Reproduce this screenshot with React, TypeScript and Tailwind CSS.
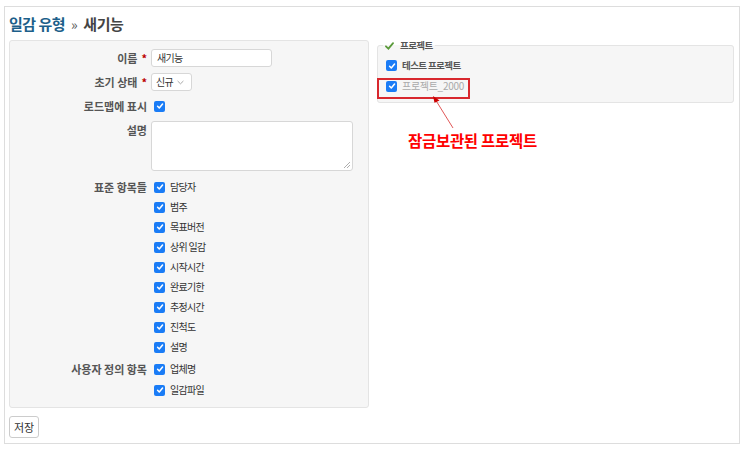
import React from "react";

const Check = ({ className = "" }: { className?: string }) => (
  <span className={"inline-flex h-[11px] w-[11px] shrink-0 items-center justify-center rounded-[2px] bg-[#1a7cf6] " + className}>
    <svg width="8" height="8" viewBox="0 0 10 10" fill="none">
      <path d="M2 5.3 L4.1 7.4 L8.2 2.6" stroke="white" strokeWidth="1.9" strokeLinecap="round" strokeLinejoin="round" />
    </svg>
  </span>
);

const Label = ({ text, req, top }: { text: string; req?: boolean; top?: boolean }) => (
  <div className={"w-[139px] shrink-0 whitespace-nowrap pr-[2px] text-right font-bold text-[#555] " + (top ? "pt-[4px]" : "")}>
    {text}
    {req && <span className="ml-[4px] text-[#bb0000]">*</span>}
  </div>
);

const Row = ({ label, req, children, top }: { label: string; req?: boolean; children: React.ReactNode; top?: boolean }) => (
  <div className={"flex " + (top ? "items-start" : "items-center")}>
    <Label text={label} req={req} top={top} />
    <div className="ml-[2px] flex-1">{children}</div>
  </div>
);

const CheckItem = ({ text }: { text: string }) => (
  <div className="flex h-[20px] items-center pl-[3px]">
    <Check />
    <span className="ml-[5px] whitespace-pre text-[10px] tracking-[-0.7px] text-[#333]">{text}</span>
  </div>
);

export default function App() {
  const std = ["담당자", "범주", "목표버전", "상위 일감", "시작시간", "완료기한", "추정시간", "진척도", "설명"];
  return (
    <div
      className="bg-white text-[11px] leading-none text-[#333]"
      style={{ fontFamily: '"Noto Sans CJK KR", "Noto Sans", sans-serif' }}
    >
      <div className="ml-[4px] mt-[6px] h-[438px] w-[736px] border border-[#dddddd] px-[4px]">
        <div className="flex h-[33px] items-center whitespace-nowrap text-[15px] font-bold tracking-[-0.5px]">
          <span className="text-[#1d5f8a]">일감 유형</span>
          <span className="mx-[6px] text-[14px] font-normal text-[#555]">»</span>
          <span className="text-[#444]">새기능</span>
        </div>
        <div className="flex items-start gap-[8px]">
          <div className="w-[360px] rounded-[3px] border border-[#e4e4e4] bg-[#f6f6f6] pb-[7px] pt-[8px]">
            <Row label="이름" req>
              <div className="flex h-[18px] w-[121px] items-center rounded-[3px] border border-[#d7d7d7] bg-white px-[5px] text-[10px] tracking-[-0.7px] text-[#333]">새기능</div>
            </Row>
            <div className="mt-[6px]">
              <Row label="초기 상태" req>
                <div className="flex h-[18px] w-[41px] items-center gap-[4px] whitespace-nowrap rounded-[3px] border border-[#d7d7d7] bg-white px-[4px] text-[10px] tracking-[-0.6px] text-[#333]">
                  신규
                  <svg width="7" height="5" viewBox="0 0 8 5" fill="none">
                    <path d="M0.7 0.8 L4 4 L7.3 0.8" stroke="#999" strokeWidth="1" />
                  </svg>
                </div>
              </Row>
            </div>
            <div className="mt-[5px] h-[20px]">
              <Row label="로드맵에 표시">
                <div className="flex h-[20px] items-center pl-[3px]">
                  <Check />
                </div>
              </Row>
            </div>
            <div className="mt-[5px]">
              <Row label="설명" top>
                <div className="relative h-[50px] w-[202px] rounded-[3px] border border-[#d7d7d7] bg-white">
                  <svg className="absolute bottom-[2px] right-[2px]" width="7" height="7" viewBox="0 0 7 7">
                    <path d="M1 7 L7 1 M4 7 L7 4" stroke="#999" strokeWidth="0.8" />
                  </svg>
                </div>
              </Row>
            </div>
            <div className="mt-[6px]">
              {std.map((s, i) => (
                <div key={s} className="flex items-center">
                  <Label text={i === 0 ? "표준 항목들" : ""} />
                  <div className="ml-[2px]">
                    <CheckItem text={s} />
                  </div>
                </div>
              ))}
            </div>
            <div className="mt-[2px]">
              {["업체명", "일감파일"].map((s, i) => (
                <div key={s} className={"flex items-center " + (i === 1 ? "mt-[1px]" : "")}>
                  <Label text={i === 0 ? "사용자 정의 항목" : ""} />
                  <div className="ml-[2px]">
                    <CheckItem text={s} />
                  </div>
                </div>
              ))}
            </div>
          </div>
          <div className="relative flex-1 pr-[1px]">
            <fieldset className="mt-[1px] rounded-[3px] border border-[#e4e4e4] bg-[#f6f6f6] px-[8px] pb-[5px] pt-[5px] text-[9.5px] tracking-[-0.6px]">
              <legend className="ml-[-3px] flex items-center px-[2px] font-bold text-[#555]">
                <svg width="9" height="8" viewBox="0 0 10 9" className="mr-[6px]">
                  <path d="M1 4.8 L3.8 7.5 L9 1.2" stroke="#5a9a3a" strokeWidth="2" fill="none" strokeLinecap="round" />
                </svg>
                프로젝트
              </legend>
              <div className="flex h-[20px] items-center">
                <Check />
                <span className="ml-[5px] font-bold text-[#555]">테스트 프로젝트</span>
              </div>
              <div className="flex h-[21px] items-center">
                <Check />
                <span className="ml-[5px] text-[10px] tracking-[-0.3px] text-[#aaa]">프로젝트_2000</span>
              </div>
            </fieldset>
            <div className="absolute left-0 top-[38px] h-[21px] w-[93px] border-2 border-[#d8282e]" />
            <svg className="absolute left-[52px] top-[56px]" width="30" height="40" viewBox="0 0 30 40">
              <line x1="24" y1="32" x2="6" y2="3" stroke="#d44" strokeWidth="0.9" />
              <path d="M4 0 L10.5 4.5 L5.5 6.8 Z" fill="#c00" />
            </svg>
            <div className="ml-[31px] mt-[30px] text-[15.5px] font-bold tracking-[-0.3px] text-[#ff0000]">잠금보관된 프로젝트</div>
          </div>
        </div>
        <div className="mt-[8px] flex h-[22px] w-[30px] items-center justify-center rounded-[3px] border border-[#cccccc] bg-white text-[#333]">
          저장
        </div>
      </div>
    </div>
  );
}
